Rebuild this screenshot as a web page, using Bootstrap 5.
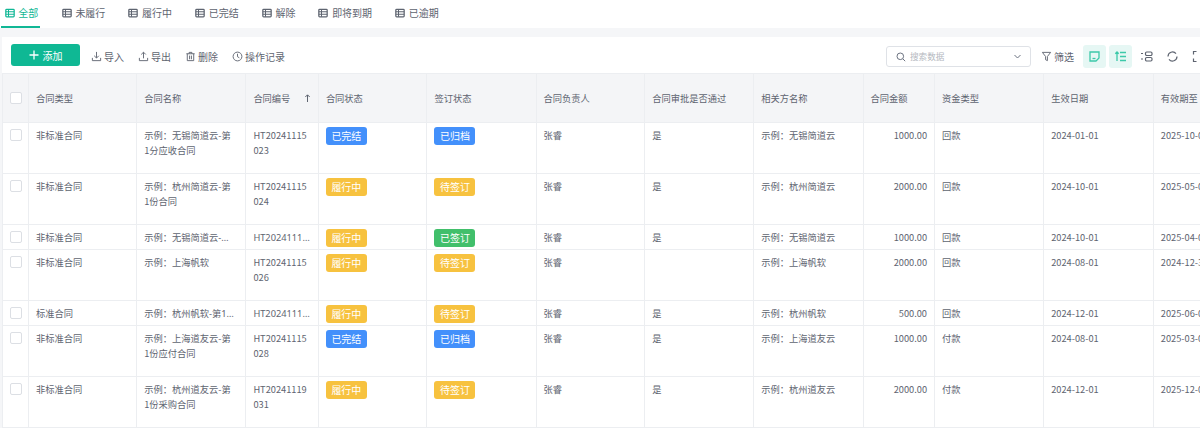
<!DOCTYPE html>
<html lang="zh">
<head>
<meta charset="utf-8">
<title>合同</title>
<link rel="stylesheet" href="https://cdn.jsdelivr.net/npm/bootstrap@5.3.0/dist/css/bootstrap.min.css">
<style>
html,body{height:428px;overflow:hidden;background:#f5f6f8;}
body{font-family:"Noto Sans CJK SC","Noto Sans",sans-serif;font-size:10px;color:#5e6470;}
.tabbar{height:28px;background:#fff;padding-left:1px;}
.tabitem{height:28px;padding:0 3px 1px;margin-right:17px;display:flex;align-items:center;gap:3.7px;color:#5e6470;font-size:10px;border-bottom:2px solid transparent;}
.tabitem.on{color:#10b795;border-bottom-color:#10b795;padding:0 2px 1px 3.5px;margin-right:18.5px;}
.tabitem svg{width:10px;height:10px;flex:none;}
.sheet{margin-top:9px;height:391px;background:#fff;margin-left:2px;overflow:hidden;}
.toolrow{height:36px;padding-top:3px;margin-right:-10px;}
.addbtn{background:#0fb894;color:#fff;width:69px;height:22px;border-radius:3px;font-size:10px;display:flex;align-items:center;justify-content:center;gap:4px;margin:-3px 11px 0 9px;}
.toolitem{display:flex;align-items:center;gap:2px;color:#5e6470;font-size:10px;margin-right:14px;}
.toolitem svg{width:11px;height:11px;flex:none;}
.searchbox{width:145px;height:21px;border:1px solid #dfe2e7;border-radius:3px;color:#b4b8c0;font-size:8.6px;padding:0 8px 0 9px;display:flex;align-items:center;gap:4px;margin-right:10px;}
.searchbox .chev{margin-left:auto;}
.iconbox{width:23px;height:23px;border-radius:3px;display:flex;align-items:center;justify-content:center;margin-right:3px;}
.iconbox.lit{background:#e6f7f4;}
.iconbox svg{width:13px;height:13px;}
.filteritem{margin-right:9px;}
.gridwrap{width:1300px;}
table.datagrid{table-layout:fixed;width:1261px;border-collapse:collapse;margin:0;font-size:9.25px;}
.datagrid th,.datagrid td{border:1px solid #eceef1;padding:5px 7px 0 7px;vertical-align:top;line-height:15px;font-weight:400;color:#5e6470;word-break:break-all;overflow:hidden;}
.datagrid th{background:#f4f5f7;height:49px;vertical-align:middle;padding-top:0;}
.datagrid td{background:#fff;}
.datagrid td.namecell{padding-right:10px;}
.rowtall td{height:51px;}
.rowshort td{height:25px;}
.rowshort td .clip{font-family:"Noto Sans","Noto Sans CJK SC",sans-serif;white-space:nowrap;overflow:hidden;text-overflow:ellipsis;}
.datagrid .chk{padding:6px 0 0 7px;}
.datagrid th.chk{padding-top:0;}
.tick{display:block;width:12px;height:12px;border:1px solid #dcdfe4;border-radius:2px;background:#fff;}
.tag{display:inline-block;width:41px;height:18px;line-height:18px;border-radius:3px;text-align:center;color:#fff;font-size:10px;vertical-align:top;margin-top:-1px;}
.tag-blue{background:#4390fb;}
.tag-yellow{background:#f7c23f;}
.tag-green{background:#41bf6b;}
.datagrid .num{text-align:right;}
.sorthead{display:flex;justify-content:space-between;align-items:center;}
</style>
</head>
<body>
<svg width="0" height="0" class="d-block" aria-hidden="true">
<symbol id="ic-table" viewBox="0 0 12 12"><rect x="1" y="1.5" width="10" height="9" rx="1" fill="none" stroke="currentColor" stroke-width="1.5"/><path d="M1 4.5h10M1 7.5h10M4.2 1.5v9" stroke="currentColor" stroke-width="1.2"/></symbol>
</svg>
<nav class="tabbar d-flex align-items-stretch">
  <div class="tabitem on"><svg><use href="#ic-table"/></svg>全部</div>
  <div class="tabitem"><svg><use href="#ic-table"/></svg>未履行</div>
  <div class="tabitem"><svg><use href="#ic-table"/></svg>履行中</div>
  <div class="tabitem"><svg><use href="#ic-table"/></svg>已完结</div>
  <div class="tabitem"><svg><use href="#ic-table"/></svg>解除</div>
  <div class="tabitem"><svg><use href="#ic-table"/></svg>即将到期</div>
  <div class="tabitem"><svg><use href="#ic-table"/></svg>已逾期</div>
</nav>
<main class="sheet">
  <div class="toolrow d-flex align-items-center">
    <div class="addbtn"><svg width="10" height="10" viewBox="0 0 10 10"><path d="M5 .5v9M.5 5h9" stroke="#fff" stroke-width="1.3"/></svg>添加</div>
    <div class="toolitem"><svg viewBox="0 0 12 12" fill="none" stroke="currentColor"><path d="M6 1v6.5M3.5 5.2 6 7.7l2.5-2.5M1.5 7.5v3h9v-3"/></svg>导入</div>
    <div class="toolitem"><svg viewBox="0 0 12 12" fill="none" stroke="currentColor"><path d="M6 8V1.5M3.5 3.8 6 1.3l2.5 2.5M1.5 7.5v3h9v-3"/></svg>导出</div>
    <div class="toolitem"><svg viewBox="0 0 12 12" fill="none" stroke="currentColor"><path d="M1.5 3h9M4.5 3V1.5h3V3M2.5 3v7.5h7V3M5 5v4M7 5v4"/></svg>删除</div>
    <div class="toolitem"><svg viewBox="0 0 12 12" fill="none" stroke="currentColor"><circle cx="6" cy="6" r="4.8"/><path d="M6 3v3.2l2 1.2"/></svg>操作记录</div>
    <div class="ms-auto d-flex align-items-center">
      <div class="searchbox"><svg width="10" height="10" viewBox="0 0 10 10" fill="none" stroke="#6b7280"><circle cx="4.3" cy="4.3" r="3.3"/><path d="m6.8 6.8 2.4 2.4"/></svg>搜索数据<svg class="chev" width="9" height="9" viewBox="0 0 9 9" fill="none" stroke="#6b7280"><path d="m1.5 3 3 3 3-3"/></svg></div>
      <div class="toolitem filteritem"><svg viewBox="0 0 12 12" fill="none" stroke="currentColor"><path d="M1.5 1.5h9L7 6v4.5L5 9.5V6z"/></svg>筛选</div>
      <div class="iconbox lit"><svg viewBox="0 0 13 13" fill="none" stroke="#3cc9a9" stroke-width="1.3"><path d="M2 2h9v6l-3 3H2z"/><path d="M4.5 8.5h3"/></svg></div>
      <div class="iconbox lit"><svg viewBox="0 0 13 13" fill="none" stroke="#3cc9a9" stroke-width="1.3"><path d="M6 2.5h6M6 6.5h6M6 10.5h6M3 11V2M1.3 3.8 3 2l1.7 1.8"/></svg></div>
      <div class="iconbox"><svg viewBox="0 0 13 13" fill="none" stroke="#5e6470" stroke-width="1.2"><rect x="5.5" y="2" width="6.5" height="3.5" rx="1.2"/><rect x="5.5" y="7.5" width="6.5" height="3.5" rx="1.2"/><path d="M1 3.5h2M1 9h2"/></svg></div>
      <div class="iconbox"><svg viewBox="0 0 13 13" fill="none" stroke="#5e6470" stroke-width="1.2"><path d="M2 6.5a4.5 4.5 0 0 1 8-2.8M11 6.5a4.5 4.5 0 0 1-8 2.8"/></svg></div>
      <div class="iconbox me-0"><svg viewBox="0 0 13 13" fill="none" stroke="#5e6470" stroke-width="1.2"><path d="M1.5 4.5v-3h3M8.5 1.5h3v3M11.5 8.5v3h-3M4.5 11.5h-3v-3"/></svg></div>
    </div>
  </div>
  <div class="gridwrap">
  <table class="datagrid">
    <colgroup>
      <col style="width:26px"><col style="width:108px"><col style="width:109px"><col style="width:72.4px"><col style="width:108.4px"><col style="width:109px"><col style="width:108.4px"><col style="width:109px"><col style="width:109px"><col style="width:71.4px"><col style="width:109px"><col style="width:109.4px"><col style="width:109px">
    </colgroup>
    <thead><tr>
      <th class="chk"><span class="tick"></span></th><th>合同类型</th><th>合同名称</th><th><div class="sorthead">合同编号<svg width="7" height="8" viewBox="0 0 7 8" fill="none" stroke="#5e6470"><path d="M3.5 8V1M1.3 3 3.5 .8 5.7 3"/></svg></div></th><th>合同状态</th><th>签订状态</th><th>合同负责人</th><th>合同审批是否通过</th><th>相关方名称</th><th>合同金额</th><th>资金类型</th><th>生效日期</th><th>有效期至</th>
    </tr></thead>
    <tbody>
      <tr class="rowtall"><td class="chk"><span class="tick"></span></td><td>非标准合同</td><td class="namecell">示例：无锡简道云-第1分应收合同</td><td>HT20241115023</td><td><span class="tag tag-blue">已完结</span></td><td><span class="tag tag-blue">已归档</span></td><td>张睿</td><td>是</td><td>示例：无锡简道云</td><td class="num">1000.00</td><td>回款</td><td>2024-01-01</td><td>2025-10-01</td></tr>
      <tr class="rowtall"><td class="chk"><span class="tick"></span></td><td>非标准合同</td><td class="namecell">示例：杭州简道云-第1份合同</td><td>HT20241115024</td><td><span class="tag tag-yellow">履行中</span></td><td><span class="tag tag-yellow">待签订</span></td><td>张睿</td><td>是</td><td>示例：杭州简道云</td><td class="num">2000.00</td><td>回款</td><td>2024-10-01</td><td>2025-05-01</td></tr>
      <tr class="rowshort"><td class="chk"><span class="tick"></span></td><td>非标准合同</td><td class="namecell"><div class="clip">示例：无锡简道云-第1分合同</div></td><td><div class="clip">HT20241115025</div></td><td><span class="tag tag-yellow">履行中</span></td><td><span class="tag tag-green">已签订</span></td><td>张睿</td><td>是</td><td>示例：无锡简道云</td><td class="num">1000.00</td><td>回款</td><td>2024-10-01</td><td>2025-04-01</td></tr>
      <tr class="rowtall"><td class="chk"><span class="tick"></span></td><td>非标准合同</td><td class="namecell">示例：上海帆软</td><td>HT20241115026</td><td><span class="tag tag-yellow">履行中</span></td><td><span class="tag tag-yellow">待签订</span></td><td>张睿</td><td></td><td>示例：上海帆软</td><td class="num">2000.00</td><td>回款</td><td>2024-08-01</td><td>2024-12-31</td></tr>
      <tr class="rowshort"><td class="chk"><span class="tick"></span></td><td>标准合同</td><td class="namecell"><div class="clip">示例：杭州帆软-第1份合同</div></td><td><div class="clip">HT20241115027</div></td><td><span class="tag tag-yellow">履行中</span></td><td><span class="tag tag-yellow">待签订</span></td><td>张睿</td><td>是</td><td>示例：杭州帆软</td><td class="num">500.00</td><td>回款</td><td>2024-12-01</td><td>2025-06-01</td></tr>
      <tr class="rowtall"><td class="chk"><span class="tick"></span></td><td>非标准合同</td><td class="namecell">示例：上海道友云-第1份应付合同</td><td>HT20241115028</td><td><span class="tag tag-blue">已完结</span></td><td><span class="tag tag-blue">已归档</span></td><td>张睿</td><td>是</td><td>示例：上海道友云</td><td class="num">1000.00</td><td>付款</td><td>2024-08-01</td><td>2025-03-01</td></tr>
      <tr class="rowtall"><td class="chk"><span class="tick"></span></td><td>非标准合同</td><td class="namecell">示例：杭州道友云-第1份采购合同</td><td>HT20241119031</td><td><span class="tag tag-yellow">履行中</span></td><td><span class="tag tag-yellow">待签订</span></td><td>张睿</td><td>是</td><td>示例：杭州道友云</td><td class="num">2000.00</td><td>付款</td><td>2024-12-01</td><td>2025-12-01</td></tr>
    </tbody>
  </table>
  </div>
</main>
</body>
</html>
